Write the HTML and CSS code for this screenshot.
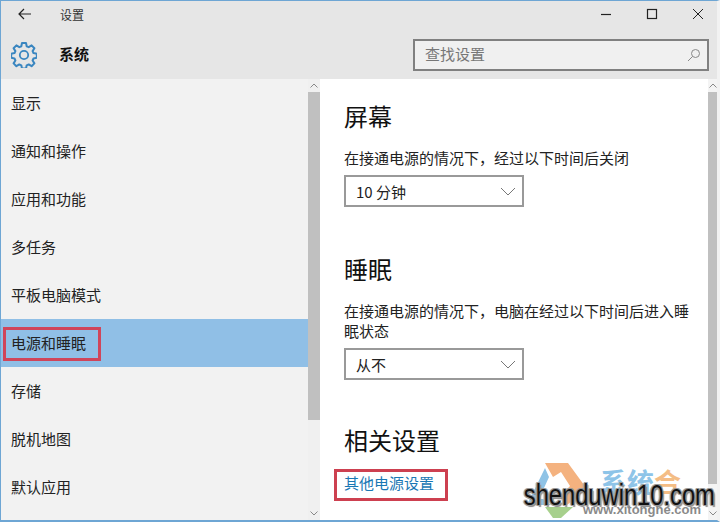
FILE: index.html
```html
<!DOCTYPE html>
<html lang="zh-CN">
<head>
<meta charset="utf-8">
<title>设置</title>
<link rel="stylesheet" href="styles.css">
</head>
<body>
<div class="window">
  <header class="head">
    <div class="titlebar">
      <svg class="back" width="13" height="12" viewBox="0 0 13 12"><path d="M13 6H1M6 1 1 6l5 5" fill="none" stroke="#222" stroke-width="1.2"/></svg>
      <span class="title">设置</span>
      <div class="controls">
        <svg width="12" height="12" viewBox="0 0 12 12"><path d="M1 6.500h10" stroke="#222" stroke-width="1.2"/></svg>
        <svg width="12" height="12" viewBox="0 0 12 12"><rect x="1.500" y="1.500" width="9" height="9" fill="none" stroke="#222" stroke-width="1.2"/></svg>
        <svg width="12" height="12" viewBox="0 0 12 12"><path d="M1 1l10 10M11 1 1 11" stroke="#222" stroke-width="1"/></svg>
      </div>
    </div>
    <div class="appbar">
      <svg class="gear" width="26" height="26" viewBox="0 0 26 26"><path d="M11 1.500h4l.7 3.300 2 .9 2.900-1.800 2.800 2.800-1.800 2.900.9 2 3.300.7v4l-3.300.7-.9 2 1.800 2.900-2.800 2.800-2.900-1.800-2 .9-.7 3.300h-4l-.7-3.300-2-.9-2.900 1.800-2.800-2.800 1.800-2.900-.9-2-3.300-.7v-4l3.300-.7.9-2-1.800-2.900 2.800-2.800 2.900 1.800 2-.9z" transform="translate(0 -.5)" fill="none" stroke="#3a86c0" stroke-width="2" stroke-linejoin="round"/><circle cx="13" cy="13" r="4.200" fill="none" stroke="#3a86c0" stroke-width="1.800"/></svg>
      <strong class="apptitle">系统</strong>
      <div class="search"><span class="searchtext">查找设置</span><svg width="14" height="14" viewBox="0 0 14 14"><circle cx="8.500" cy="5.500" r="4" fill="none" stroke="#888"/><path d="M5.500 8.500 1 13" stroke="#888"/></svg></div>
    </div>
  </header>
  <div class="main">
    <nav class="nav">
      <div class="navlist">
        <a class="item">显示</a>
        <a class="item">通知和操作</a>
        <a class="item">应用和功能</a>
        <a class="item">多任务</a>
        <a class="item">平板电脑模式</a>
        <a class="item active"><span class="mark">电源和睡眠</span></a>
        <a class="item">存储</a>
        <a class="item">脱机地图</a>
        <a class="item">默认应用</a>
      </div>
      <div class="bar left">
        <svg class="arrow" width="8" height="5" viewBox="0 0 8 5"><path d="M.5 4.500 4 1l3.500 3.500" fill="none" stroke="#888"/></svg>
        <div class="thumb"></div>
        <svg class="arrow" width="8" height="5" viewBox="0 0 8 5"><path d="M.5.500 4 4 7.500.500" fill="none" stroke="#888"/></svg>
      </div>
    </nav>
    <section class="content">
      <div class="page">
        <h2>屏幕</h2>
        <p class="label">在接通电源的情况下，经过以下时间后关闭</p>
        <div class="select"><span>10 分钟</span><svg width="16" height="9" viewBox="0 0 16 9"><path d="M1 1l7 7 7-7" fill="none" stroke="#777"/></svg></div>
        <h2 class="gap">睡眠</h2>
        <p class="label">在接通电源的情况下，电脑在经过以下时间后进入睡眠状态</p>
        <div class="select"><span>从不</span><svg width="16" height="9" viewBox="0 0 16 9"><path d="M1 1l7 7 7-7" fill="none" stroke="#777"/></svg></div>
        <h2 class="gap-last">相关设置</h2>
        <a class="link">其他电源设置</a>
      </div>
      <div class="bar right">
        <svg class="arrow" width="8" height="5" viewBox="0 0 8 5"><path d="M.5 4.500 4 1l3.500 3.500" fill="none" stroke="#888"/></svg>
        <div class="thumb"></div>
        <svg class="arrow" width="8" height="5" viewBox="0 0 8 5"><path d="M.5.500 4 4 7.500.500" fill="none" stroke="#888"/></svg>
      </div>
      <div class="logo">
        <svg width="62" height="55" viewBox="0 0 62 55"><path d="M20 5 2 42h24l-8-6h-4l10-22z" fill="#8fc3e6"/><path d="M20 0h23l19 26-20 16-8-8 11-11-9-14-8 5z" fill="#f4b27f"/><path d="M20 44h28L36 55h-8z" fill="#a7d08c"/></svg>
        <span class="logotext">系统<span class="logohe">合</span></span>
        <span class="logourl">www.xitonghe.com</span>
      </div>
      <div class="stamp">shenduwin10.com</div>
    </section>
  </div>
</div>
</body>
</html>
```
FILE: styles.css
```css
* { box-sizing: border-box; }
html, body { margin: 0; padding: 0; }
body { width: 720px; height: 522px; overflow: hidden; background: #fff; font-family: "Noto Sans CJK SC", "Liberation Sans", sans-serif; color: #222; }
.window { width: 720px; height: 522px; display: flex; flex-direction: column; border: 1px solid #6ea6d4; border-width: 1px 3px 2px 1px; border-right-color: #f2f2f2; overflow: hidden; }
.head { background: #e6e6e6; height: 78px; flex: none; }
.titlebar { height: 26px; display: flex; align-items: center; padding-left: 17px; }
.title { margin-left: 29px; font-size: 12px; color: #333; }
.controls { margin-left: auto; display: flex; gap: 34px; padding-right: 13px; }
.appbar { height: 52px; display: flex; align-items: center; padding: 3px 0 0 10px; }
.gear { flex: none; }
.apptitle { margin-left: 22px; padding-bottom: 3px; font-size: 15px; color: #111; }
.search { margin-left: auto; margin-right: 8px; width: 296px; height: 32px; border: 2px solid #808080; background: #f0f0f0; display: flex; align-items: center; justify-content: space-between; padding: 0 6px 0 10px; font-size: 15px; color: #777; }
.searchtext { padding-bottom: 3px; }
.main { flex: 1; display: flex; min-height: 0; }
.nav { width: 319px; flex: none; display: flex; background: #f2f2f2; }
.navlist { flex: 1; }
.item { display: flex; align-items: center; height: 48px; padding: 0 0 1px 10px; font-size: 15px; line-height: 22px; color: #222; }
.active { background: #90bfe6; }
.mark { display: block; position: relative; }
.mark::after { content: ""; position: absolute; box-sizing: border-box; left: -8px; top: -5px; width: 98px; height: 34px; border: 3px solid #d0455a; }
.bar { width: 12px; flex: none; display: flex; flex-direction: column; align-items: center; background: #f0f0f0; }
.bar .arrow { margin: 4px 0; flex: none; }
.thumb { background: #c0c0c0; width: 100%; }
.left .thumb { height: 328px; }
.left .arrow:last-child { margin-top: auto; }
.content { flex: 1; display: flex; position: relative; min-width: 0; }
.page { flex: 1; padding: 21px 0 0 24px; }
h2 { margin: 0; font-size: 24px; font-weight: 400; line-height: 32px; color: #111; }
h2.gap { margin-top: 46px; }
h2.gap-last { margin-top: 44px; }
.label { margin: 16px 15px 0 0; font-size: 15px; line-height: 20px; color: #222; }
.select { margin-top: 7px; width: 180px; height: 32px; border: 2px solid #999; display: flex; align-items: center; justify-content: space-between; padding: 0 6px 0 10px; font-size: 15px; color: #222; }
.link { display: inline-block; position: relative; margin-top: 16px; font-size: 15px; line-height: 22px; color: #1a78b4; }
.link::after { content: ""; position: absolute; box-sizing: border-box; left: -10px; top: -3px; width: 114px; height: 32px; border: 3px solid #cd4050; }
.right { width: 9px; background: #f4f4f4; }
.right .thumb { height: 392px; }
.right .arrow:last-child { margin-top: auto; }
.logo { position: absolute; right: 9px; bottom: 0; width: 183px; height: 57px; background: #fff; }
.logo svg { position: absolute; left: 0; top: 0; }
.logotext { position: absolute; left: 75px; top: 1px; font-size: 27px; line-height: 36px; color: #8ec4e8; font-weight: 700; }
.logohe { color: #f4bd85; }
.logourl { position: absolute; left: 58px; bottom: 3px; font-family: "Liberation Sans", sans-serif; font-size: 13px; line-height: 15px; font-weight: 700; color: #8a8a8a; }
.stamp { position: absolute; right: 2px; bottom: 8px; font-family: "Liberation Sans", sans-serif; font-size: 30px; line-height: 34px; color: #111; transform: scaleX(0.79); transform-origin: right center; text-shadow: 1px 1px 0 #999, -1px -1px 0 #999, 1px -1px 0 #999, -1px 1px 0 #999, 2px 2px 1px #888, -2px 0 1px #aaa; }
```
